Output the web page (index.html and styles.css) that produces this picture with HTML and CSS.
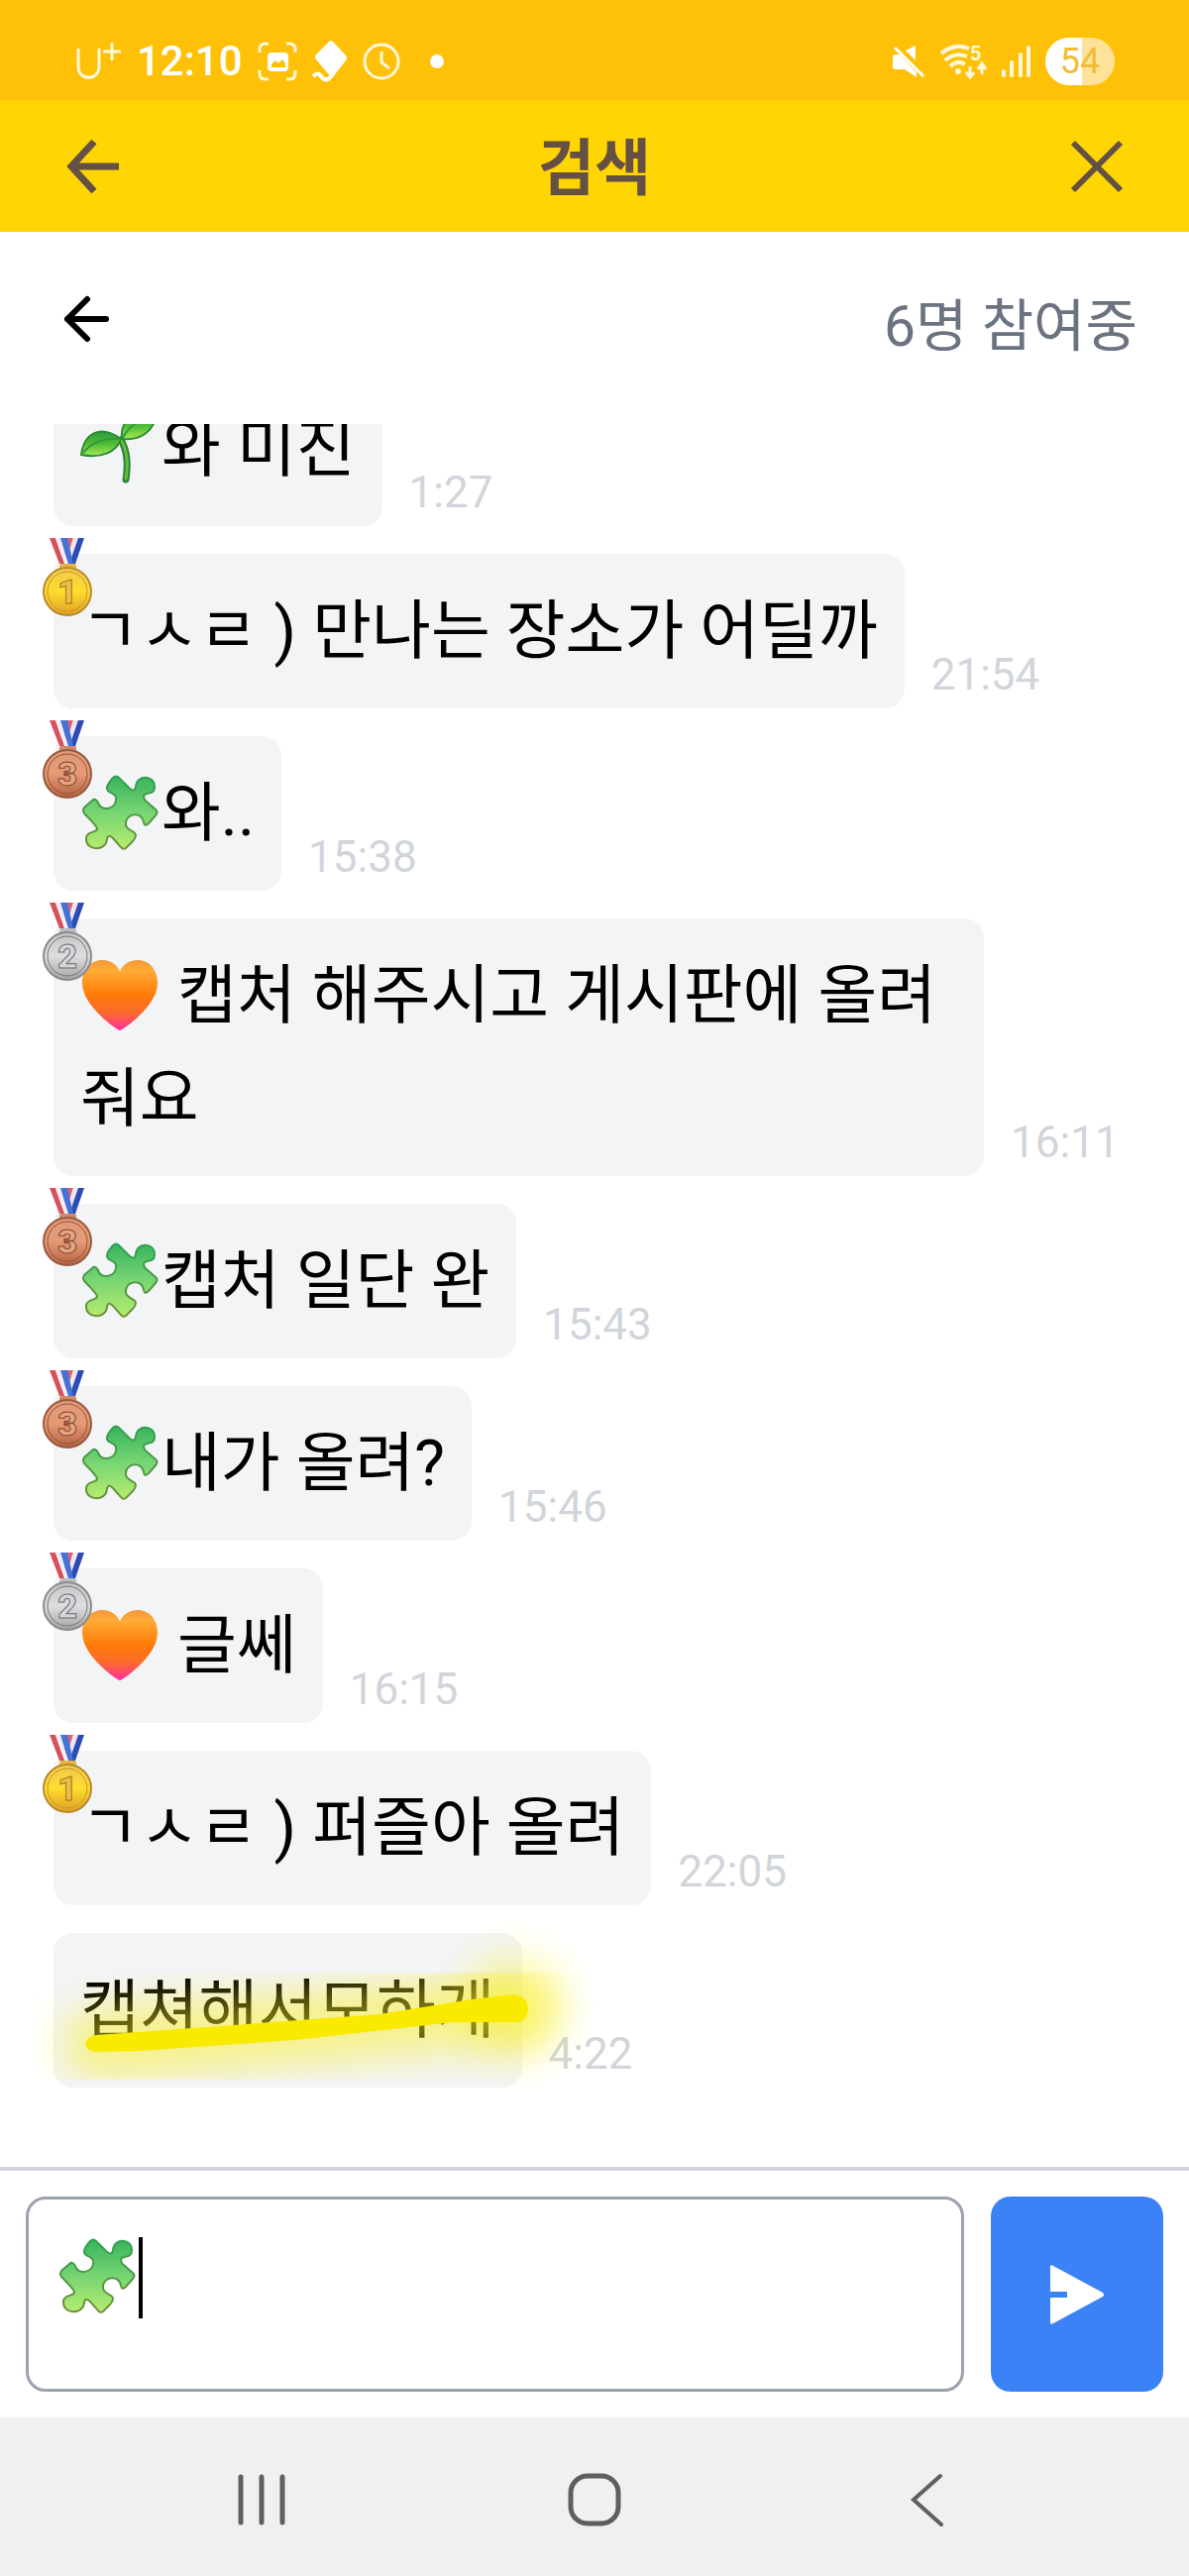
FILE: index.html
```html
<!DOCTYPE html>
<html lang="ko">
<head>
    <meta charset="UTF-8">
    <meta name="viewport" content="width=device-width, initial-scale=1.0">
    <title>검색</title>
    <link rel="stylesheet" href="styles.css">
</head>
<body>
    <!-- shared icons -->
    <svg class="defs" width="0" height="0" aria-hidden="true">
        <defs>
            <linearGradient id="puzzle-fill" x1="0" y1="0" x2="0" y2="1">
                <stop offset="0" stop-color="#37b35c"/>
                <stop offset="0.5" stop-color="#77d573"/>
                <stop offset="1" stop-color="#b6ec6e"/>
            </linearGradient>
            <linearGradient id="puzzle-edge" x1="0" y1="0" x2="0" y2="1">
                <stop offset="0" stop-color="#2fa052"/>
                <stop offset="1" stop-color="#6f9238"/>
            </linearGradient>
            <linearGradient id="heart-fill" x1="0" y1="0" x2="0" y2="1">
                <stop offset="0" stop-color="#f59a3c"/>
                <stop offset="0.15" stop-color="#ffab35"/>
                <stop offset="0.5" stop-color="#ff7a08"/>
                <stop offset="0.75" stop-color="#fb6a2c"/>
                <stop offset="1" stop-color="#ff2fa0"/>
            </linearGradient>
            <linearGradient id="leaf-fill" x1="0" y1="0" x2="0" y2="1">
                <stop offset="0" stop-color="#2f9a3c"/>
                <stop offset="0.5" stop-color="#4fbc35"/>
                <stop offset="1" stop-color="#a4ea55"/>
            </linearGradient>
            <linearGradient id="gold" x1="0" y1="0" x2="0" y2="1">
                <stop offset="0" stop-color="#f0c84e"/>
                <stop offset="0.5" stop-color="#ffdd2e"/>
                <stop offset="1" stop-color="#dfa024"/>
            </linearGradient>
            <linearGradient id="silver" x1="0" y1="0" x2="0" y2="1">
                <stop offset="0" stop-color="#c4c4c6"/>
                <stop offset="0.5" stop-color="#dedee0"/>
                <stop offset="1" stop-color="#a3a3a5"/>
            </linearGradient>
            <linearGradient id="bronze" x1="0" y1="0" x2="0" y2="1">
                <stop offset="0" stop-color="#e09a78"/>
                <stop offset="0.5" stop-color="#e59a75"/>
                <stop offset="1" stop-color="#b5623f"/>
            </linearGradient>
            <filter id="glow" x="-30%" y="-100%" width="160%" height="300%">
                <feGaussianBlur stdDeviation="19"/>
            </filter>
        </defs>
        <symbol id="puzzle" viewBox="0 0 80 80">
            <path d="M33 4Q36 1 39 4L50 15Q55 19 56 13C57 0 76 1 75 14C75 22 64 18 64 23Q64 26 68 29L76 36Q79 39 76 42L69 50Q65 54 64 49C62 37 45 40 46 51C46 58 56 57 56 62Q56 65 53 68L46 75Q43 77 41 74L33 65Q28 60 27 66C26 79 5 78 6 65C6 57 18 60 17 55Q16 52 4 40Q2 37 4 34L12 27Q15 24 18 29C20 39 38 36 36 24C35 18 26 20 27 14Q27 11 33 4Z" fill="url(#puzzle-fill)" stroke="url(#puzzle-edge)" stroke-width="2"/>
        </symbol>
        <symbol id="heart" viewBox="0 0 80 80">
            <path d="M40 75C38 75 2 51 2 27C2 13 11 4 22 4C31 4 38 9 40 16C42 9 49 4 58 4C69 4 78 13 78 27C78 51 42 75 40 75Z" fill="url(#heart-fill)"/>
        </symbol>
        <symbol id="sprout" viewBox="0 0 80 80">
            <path d="M41 31Q50 46 46 71" fill="none" stroke="#2c8434" stroke-width="7" stroke-linecap="round"/>
            <path d="M41 31Q50 46 46 70" fill="none" stroke="#62bd41" stroke-width="3" stroke-linecap="round"/>
            <path d="M1 46C4 24 20 15 41 30C37 43 22 50 1 46Z" fill="url(#leaf-fill)" stroke="#2c8a35" stroke-width="2"/>
            <path d="M42 30C40 12 52 3 77 4C75 22 61 32 42 30Z" fill="url(#leaf-fill)" stroke="#2c8a35" stroke-width="2"/>
            <path d="M3 44Q16 28 40 30M43 29Q50 14 70 8" fill="none" stroke="#2f9a3c" stroke-width="2"/>
        </symbol>
        <symbol id="ribbon" viewBox="0 0 52 28">
            <path d="M26 0H32L24 26H18Z" fill="#d9646c"/>
            <path d="M32 0H37L29 26H24Z" fill="#efe6f4"/>
            <path d="M37 0H43L34 26H28Z" fill="#2c4cb4"/>
            <path d="M8 0H14L23 26H18Z" fill="#d5525c"/>
            <path d="M14 0H19L27 26H23Z" fill="#f4eef8"/>
            <path d="M19 0H26L32 26H27Z" fill="#4472d8"/>
        </symbol>
        <symbol id="medal-gold" viewBox="0 0 52 80">
            <use href="#ribbon" width="52" height="28"/>
            <rect x="18" y="26" width="17" height="6" rx="2" fill="#e3b548"/>
            <circle cx="26" cy="54" r="24" fill="url(#gold)" stroke="#b98a2c" stroke-width="2"/>
            <circle cx="26" cy="54" r="20" fill="none" stroke="#c7942b" stroke-width="1"/>
        </symbol>
        <symbol id="medal-silver" viewBox="0 0 52 80">
            <use href="#ribbon" width="52" height="28"/>
            <rect x="18" y="26" width="17" height="6" rx="2" fill="#bcbcbe"/>
            <circle cx="26" cy="54" r="24" fill="url(#silver)" stroke="#8b8b8d" stroke-width="2"/>
            <circle cx="26" cy="54" r="20" fill="none" stroke="#77777a" stroke-width="1"/>
        </symbol>
        <symbol id="medal-bronze" viewBox="0 0 52 80">
            <use href="#ribbon" width="52" height="28"/>
            <rect x="18" y="26" width="17" height="6" rx="2" fill="#cf8a69"/>
            <circle cx="26" cy="54" r="24" fill="url(#bronze)" stroke="#9a5a40" stroke-width="2"/>
            <circle cx="26" cy="54" r="20" fill="none" stroke="#96533a" stroke-width="1"/>
        </symbol>
    </svg>

    <div class="status-bar">
        <div class="status-left">
            <svg width="46" height="40" viewBox="0 0 46 40" fill="none" stroke="#fff8dc" stroke-width="3">
                <path d="M2 7V25C2 40 23 40 23 25V7M27 10H45M36 1V19"/>
            </svg>
            <span class="clock">12:10</span>
            <svg width="40" height="40" viewBox="0 0 40 40">
                <path d="M2 11V8Q2 2 8 2H11M29 2H32Q38 2 38 8V11M38 29V32Q38 38 32 38H29M11 38H8Q2 38 2 32V29" fill="none" stroke="#fff8dc" stroke-width="3"/>
                <rect x="10" y="11" width="21" height="19" rx="4" fill="#fff"/>
                <path d="M14 26V23L18 19L21 22L25 18L28 22V26Z" fill="#ffc107"/>
            </svg>
            <svg width="36" height="42" viewBox="0 0 36 42">
                <path d="M17 1Q20 -1 22 2L34 15Q36 18 34 20L20 38L15 32L4 19Q2 17 4 14Z" fill="#fff"/>
                <path d="M1 36Q6 31 9 36Q15 44 21 33" fill="none" stroke="#fff" stroke-width="4"/>
            </svg>
            <svg width="38" height="38" viewBox="0 0 38 38" fill="none" stroke="#fff8dc" stroke-width="3">
                <circle cx="19" cy="19" r="17"/>
                <path d="M19 9V20L27 26"/>
            </svg>
            <span class="dot"></span>
        </div>
        <div class="status-right">
            <svg width="34" height="34" viewBox="0 0 34 34">
                <path d="M1 12Q1 10 4 10H8L25 28V33L13 25H4Q1 25 1 22Z" fill="#fff"/>
                <path d="M14 6L24 1V16Z" fill="#fff"/>
                <path d="M3 3L32 32" stroke="#fff" stroke-width="3"/>
            </svg>
            <svg width="48" height="36" viewBox="0 0 48 36" fill="none" stroke="#fff8dc" stroke-width="4">
                <path d="M2 10Q15 -1 30 5M6 17Q16 8 28 13M11 23Q18 16 26 21"/>
                <circle cx="19" cy="28" r="3" fill="#fff8dc" stroke="none"/>
                <path d="M31 23V33M27 29L31 34L35 29M43 31V21M39 26L43 20L47 26" stroke-width="3"/>
                <text x="31" y="17" class="wifi-no">5</text>
            </svg>
            <svg width="31" height="34" viewBox="0 0 31 34" stroke="#fff8dc" stroke-width="4" stroke-linecap="round">
                <path d="M3 27V31M11 18V31M20 10V31M28 3V31"/>
            </svg>
            <span class="battery">54</span>
        </div>
    </div>

    <header class="title-bar">
        <button type="button" class="icon-btn" aria-label="뒤로">
            <svg width="54" height="54" viewBox="0 0 54 54" fill="none" stroke="#655044" stroke-width="7">
                <path d="M29 2L6 27L29 52M5 27H54"/>
            </svg>
        </button>
        <h1>검색</h1>
        <button type="button" class="icon-btn" aria-label="닫기">
            <svg width="54" height="54" viewBox="0 0 54 54" fill="none" stroke="#655044" stroke-width="6">
                <path d="M3 3L51 51M51 3L3 51"/>
            </svg>
        </button>
    </header>

    <div class="room-bar">
        <button type="button" class="icon-btn" aria-label="나가기">
            <svg width="68" height="68" viewBox="0 0 68 68" fill="none" stroke="#000" stroke-width="6" stroke-linecap="round" stroke-linejoin="round">
                <path d="M34 14L14 34L34 54M14 34H53"/>
            </svg>
        </button>
        <span class="room-count">6명 참여중</span>
    </div>

    <main class="messages">
        <div class="message">
            <div class="bubble"><svg class="emoji"><use href="#sprout"/></svg>와 미진</div>
            <time>1:27</time>
        </div>
        <div class="message">
            <div class="bubble"><svg class="medal gold"><use href="#medal-gold"/><text x="26" y="66">1</text></svg>ㄱㅅㄹ ) 만나는 장소가 어딜까</div>
            <time>21:54</time>
        </div>
        <div class="message">
            <div class="bubble"><svg class="medal bronze"><use href="#medal-bronze"/><text x="26" y="66">3</text></svg><svg class="emoji"><use href="#puzzle"/></svg>와..</div>
            <time>15:38</time>
        </div>
        <div class="message">
            <div class="bubble"><svg class="medal silver"><use href="#medal-silver"/><text x="26" y="66">2</text></svg><svg class="emoji"><use href="#heart"/></svg> 캡처 해주시고 게시판에 올려줘요</div>
            <time>16:11</time>
        </div>
        <div class="message">
            <div class="bubble"><svg class="medal bronze"><use href="#medal-bronze"/><text x="26" y="66">3</text></svg><svg class="emoji"><use href="#puzzle"/></svg>캡처 일단 완</div>
            <time>15:43</time>
        </div>
        <div class="message">
            <div class="bubble"><svg class="medal bronze"><use href="#medal-bronze"/><text x="26" y="66">3</text></svg><svg class="emoji"><use href="#puzzle"/></svg>내가 올려?</div>
            <time>15:46</time>
        </div>
        <div class="message">
            <div class="bubble"><svg class="medal silver"><use href="#medal-silver"/><text x="26" y="66">2</text></svg><svg class="emoji"><use href="#heart"/></svg> 글쎄</div>
            <time>16:15</time>
        </div>
        <div class="message">
            <div class="bubble"><svg class="medal gold"><use href="#medal-gold"/><text x="26" y="66">1</text></svg>ㄱㅅㄹ ) 퍼즐아 올려</div>
            <time>22:05</time>
        </div>
        <div class="message">
            <div class="bubble">캡쳐해서모하게
                <svg class="marker" viewBox="0 0 560 200">
                    <path d="M66 112L300 94L484 76" fill="none" stroke="#f8ee20" stroke-width="74" stroke-linecap="round" stroke-linejoin="round" opacity="0.5" filter="url(#glow)"/>
                    <circle cx="484" cy="74" r="52" fill="#f8ee20" opacity="0.4" filter="url(#glow)"/>
                    <path d="M52 112Q53 105 63 103L174 95L349 82L442 67L485 62Q499 65 499 77Q498 90 487 90L424 90L264 108L107 119L63 120Q53 119 52 112Z" fill="#f9ea00"/>
                </svg>
            </div>
            <time>4:22</time>
        </div>
    </main>

    <form class="composer">
        <div class="field">
            <textarea aria-label="메시지 입력"></textarea>
            <div class="draft">
                <svg class="emoji"><use href="#puzzle"/></svg>
                <span class="caret"></span>
            </div>
        </div>
        <button type="button" class="send" aria-label="보내기">
            <svg width="56" height="62" viewBox="0 0 56 62" fill="#fff">
                <path d="M1 3Q1 0 4 2L54 29Q56 31 54 33L4 60Q1 62 1 59V34H18V28H1Z"/>
            </svg>
        </button>
    </form>

    <nav class="nav-bar">
        <button type="button" class="icon-btn" aria-label="최근 앱">
            <svg width="54" height="54" viewBox="0 0 54 54" stroke="#5f5f5f" stroke-width="5" stroke-linecap="round">
                <path d="M6 4V50M27 4V50M48 4V50"/>
            </svg>
        </button>
        <button type="button" class="icon-btn" aria-label="홈">
            <svg width="54" height="54" viewBox="0 0 54 54" fill="none" stroke="#5f5f5f" stroke-width="5">
                <rect x="3" y="3" width="48" height="48" rx="17"/>
            </svg>
        </button>
        <button type="button" class="icon-btn" aria-label="뒤로">
            <svg width="54" height="54" viewBox="0 0 54 54" fill="none" stroke="#5f5f5f" stroke-width="4" stroke-linecap="round">
                <path d="M40 3L13 27L41 52"/>
            </svg>
        </button>
    </nav>
</body>
</html>
```
FILE: styles.css
```css
* {
	box-sizing: border-box;
}

body {
	margin: 0;
	height: 100vh;
	display: flex;
	flex-direction: column;
	background: #fff;
	color: #000;
	font-family: Roboto, "Noto Sans CJK KR", sans-serif;
}

svg {
	display: block;
	flex: none;
}

.defs {
	position: absolute;
}

.icon-btn {
	display: flex;
	padding: 0;
	border: none;
	background: none;
	cursor: pointer;
}

/* phone status bar */
.status-bar {
	display: flex;
	justify-content: space-between;
	align-items: center;
	height: 101px;
	padding: 22px 75px 0 77px;
	background: #ffc107;
	color: #fff;
}

.status-left,
.status-right {
	display: flex;
	align-items: center;
}

.status-left {
	gap: 15px;
}

.clock {
	font-size: 42px;
	font-weight: 500;
	line-height: 48px;
}

.dot {
	width: 14px;
	height: 14px;
	margin-left: 15px;
	border-radius: 50%;
	background: #fff;
}

.status-right {
	gap: 14px;
}

.wifi-no {
	fill: #fff8dc;
	stroke: none;
	font-size: 20px;
	font-weight: bold;
}

.battery {
	width: 70px;
	border-radius: 24px;
	background: linear-gradient(to right, #fff 53%, #ffe29a 53%);
	color: #f3bb35;
	font-size: 36px;
	line-height: 48px;
	text-align: center;
}

.title-bar {
	display: flex;
	justify-content: space-between;
	align-items: center;
	height: 133px;
	padding: 0 66px;
	background: #ffd504;
}

.title-bar h1 {
	margin: 0;
	padding-top: 6px;
	color: #655044;
	font-size: 62px;
	font-weight: bold;
	line-height: 80px;
}

.room-bar {
	display: flex;
	justify-content: space-between;
	align-items: flex-start;
	padding: 54px 52px 56px 54px;
}

.room-count {
	color: #6b7280;
	font-size: 57px;
	line-height: 84px;
}

/* messages */
.messages {
	flex: 1;
	min-height: 0;
	overflow: hidden;
	display: flex;
	flex-direction: column;
	justify-content: flex-end;
	gap: 28px;
	padding: 0 54px 80px;
}

.message {
	flex: none;
	display: flex;
	align-items: flex-end;
	gap: 27px;
}

.bubble {
	position: relative;
	max-width: 86%;
	padding: 26px 27px;
	border-radius: 20px;
	background: #f3f4f6;
	font-size: 65px;
	line-height: 104px;
}

.message time {
	color: #d1d5db;
	font-size: 44px;
	line-height: 68px;
}

.emoji {
	display: inline-block;
	width: 80px;
	height: 80px;
	margin-right: 2px;
	vertical-align: -18px;
}

.medal {
	position: absolute;
	top: -16px;
	left: -12px;
	width: 52px;
	height: 80px;
}

.medal text {
	font-size: 34px;
	font-weight: 900;
	line-height: 34px;
	text-anchor: middle;
	stroke-width: 1px;
}

.gold text {
	fill: #eec04a;
	stroke: #a37217;
}

.silver text {
	fill: #d6d6d8;
	stroke: #6f6f72;
}

.bronze text {
	fill: #e5a585;
	stroke: #84452d;
}

.marker {
	position: absolute;
	top: 0;
	left: -20px;
	width: 560px;
	height: 200px;
	overflow: visible;
	pointer-events: none;
}

/* input area */
.composer {
	display: flex;
	gap: 27px;
	padding: 26px;
	border-top: 4px solid #d1d5db;
}

.field {
	position: relative;
	flex: 1;
	display: flex;
}

.field textarea {
	flex: 1;
	height: 197px;
	padding: 26px;
	border: 3px solid #9ca3af;
	border-radius: 20px;
	background: #fff;
	font: inherit;
	font-size: 65px;
	resize: none;
	outline: none;
}

.draft {
	position: absolute;
	top: 41px;
	left: 32px;
	display: flex;
	pointer-events: none;
}

.caret {
	width: 4px;
	height: 82px;
	background: #000;
}

.send {
	display: flex;
	justify-content: center;
	align-items: center;
	width: 174px;
	border: none;
	border-radius: 20px;
	background: #3b82f6;
	cursor: pointer;
}

.nav-bar {
	display: grid;
	grid-template-columns: repeat(3, 28%);
	justify-content: center;
	justify-items: center;
	align-items: center;
	height: 160px;
	padding-top: 6px;
	background: #f0f0f2;
}
```
